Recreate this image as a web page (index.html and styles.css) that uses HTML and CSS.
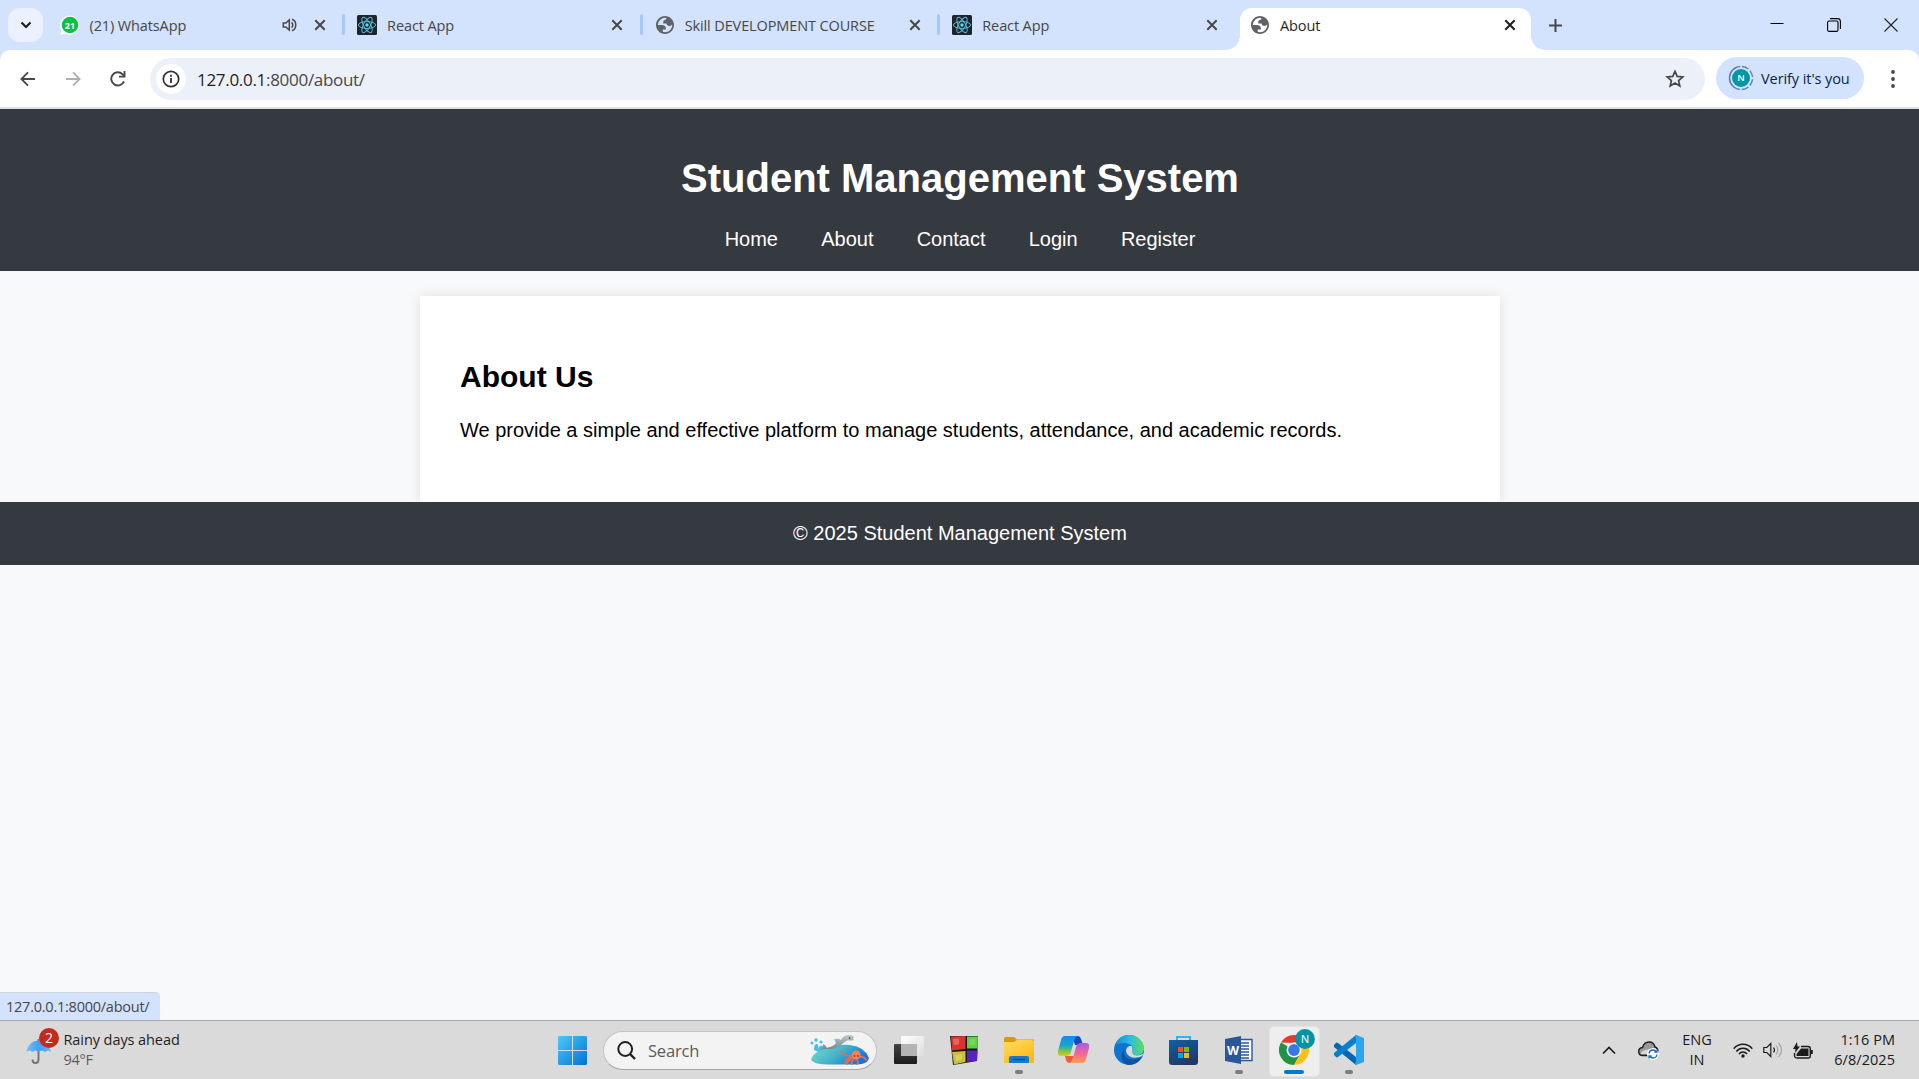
FILE: index.html
```html
<!DOCTYPE html>
<html lang="en">
<head>
<meta charset="utf-8">
<title>About</title>
<link rel="stylesheet" href="styles.css">
</head>
<body>
<svg class="defs" width="0" height="0" aria-hidden="true">
  <defs>
    <symbol id="close" viewBox="0 0 12 12"><path d="M1.300 1.300l9.400 9.400M10.700 1.300l-9.400 9.400" fill="none" stroke="currentColor" stroke-width="2"/></symbol>
    <symbol id="globe" viewBox="2 2 20 20"><path fill="currentColor" fill-rule="evenodd" d="M12 2C6.480 2 2 6.480 2 12s4.480 10 10 10 10-4.480 10-10S17.520 2 12 2zM4 12h4.400c3.407.022 4.922 1.730 4.543 5.127H9.488v2.470a8.004 8.004 0 0 0 10.498-8.083C19.327 12.504 18.332 13 17 13c-2.137 0-3.206-.916-3.206-2.750h-3.748c-.274-2.728.683-4.092 2.870-4.092 0-.975.327-1.597.811-1.970A8 8 0 0 0 4 12z"/></symbol>
    <symbol id="react" viewBox="0 0 20 20"><rect width="20" height="20" rx="1.500" fill="#20232a"/><g fill="none" stroke="#53bdd5" stroke-width="1"><ellipse cx="10" cy="10" rx="8.600" ry="3.400"/><ellipse cx="10" cy="10" rx="8.600" ry="3.400" transform="rotate(60 10 10)"/><ellipse cx="10" cy="10" rx="8.600" ry="3.400" transform="rotate(120 10 10)"/></g><circle cx="10" cy="10" r="1.700" fill="#61dafb"/></symbol>
  </defs>
</svg>

<div class="tabstrip">
  <div class="tab-search"><svg width="12" height="8" viewBox="0 0 12 8"><path d="M1.500 1.500L6 6l4.500-4.500" fill="none" stroke="#1f1f1f" stroke-width="2.200"/></svg></div>
  <div class="tab">
    <svg class="favicon" viewBox="0 0 20 20"><path d="M0 20l1.400-4.800a9.600 9.600 0 1 1 3.700 3.500z" fill="#fff"/><circle cx="10" cy="10" r="8.300" fill="#0bc143"/><text x="10" y="13.600" class="wa-count">21</text></svg>
    <span class="tab-title">(21) WhatsApp</span>
    <svg class="audio" width="16" height="14" viewBox="0 0 16 14"><path d="M1.300 5v4h2.500l3.500 3V2L3.800 5z" fill="none" stroke="#474747" stroke-width="1.500"/><path d="M9.500 4.300c1.700 1.400 1.700 4 0 5.400M10 1.300c5 1.700 5 9.700 0 11.400" fill="none" stroke="#474747" stroke-width="1.500"/></svg>
    <svg class="close"><use href="#close"/></svg>
  </div>
  <div class="tab">
    <svg class="favicon"><use href="#react"/></svg>
    <span class="tab-title">React App</span>
    <svg class="close"><use href="#close"/></svg>
  </div>
  <div class="tab">
    <svg class="favicon globe"><use href="#globe"/></svg>
    <span class="tab-title">Skill DEVELOPMENT COURSE</span>
    <svg class="close"><use href="#close"/></svg>
  </div>
  <div class="tab">
    <svg class="favicon"><use href="#react"/></svg>
    <span class="tab-title">React App</span>
    <svg class="close"><use href="#close"/></svg>
  </div>
  <div class="tab active">
    <svg class="favicon globe"><use href="#globe"/></svg>
    <span class="tab-title">About</span>
    <svg class="close"><use href="#close"/></svg>
  </div>
  <svg class="new-tab" width="13" height="13" viewBox="0 0 13 13"><path d="M6.500 0v13M0 6.500h13" stroke="#474747" stroke-width="2"/></svg>
  <div class="window-controls">
    <svg width="14" height="14" viewBox="0 0 14 14"><path d="M.5 5.500h13" stroke="#000" stroke-width="1"/></svg>
    <svg width="14" height="14" viewBox="0 0 14 14"><rect x=".6" y="3" width="10.400" height="10.400" rx="1.500" fill="none" stroke="#000" stroke-width="1.100"/><path d="M3 .6h7.500q2.900 0 2.900 2.900V11" fill="none" stroke="#000" stroke-width="1.100"/></svg>
    <svg width="14" height="14" viewBox="0 0 14 14"><path d="M.5.5l13 13M13.500.5l-13 13" stroke="#222" stroke-width="1.100"/></svg>
  </div>
</div>

<div class="toolbar">
  <div class="nav-buttons">
    <svg width="16" height="16" viewBox="0 0 16 16"><path d="M15 8H2M8 1.300L1.400 8 8 14.700" fill="none" stroke="#474747" stroke-width="1.800"/></svg>
    <svg width="16" height="16" viewBox="0 0 16 16"><path d="M1 8h13M8 1.300L14.600 8 8 14.700" fill="none" stroke="#b0b0b0" stroke-width="1.800"/></svg>
    <svg width="16" height="16" viewBox="0 0 16 16"><path d="M14 10.300A6.600 6.600 0 1 1 12.600 3.300L14.300 5" fill="none" stroke="#474747" stroke-width="1.900"/><path d="M14.500 0v5.600H9" fill="none" stroke="#474747" stroke-width="1.900"/></svg>
  </div>
  <div class="omnibox">
    <div class="site-info"><svg width="18" height="18" viewBox="0 0 18 18"><circle cx="9" cy="9" r="7.700" fill="none" stroke="#303134" stroke-width="1.700"/><path d="M9 8v5M9 4.700v2" stroke="#303134" stroke-width="1.800"/></svg></div>
    <span class="url"><b>127.0.0.1</b>:8000/about/</span>
    <svg class="star" width="20" height="19" viewBox="0 0 20 19"><path d="M10 2.300l2.200 5.100 5.600.500-4.200 3.700 1.200 5.400L10 14.100 5.200 17l1.200-5.400-4.200-3.700 5.600-.5z" fill="none" stroke="#474747" stroke-width="1.700"/></svg>
  </div>
  <div class="profile">
    <svg width="26" height="26" viewBox="0 0 26 26"><circle cx="13" cy="13" r="11.600" fill="none" stroke="#5d7fb8" stroke-width="1.400" stroke-dasharray="7 2.100" transform="rotate(-85 13 13)"/><path d="M9 2.100A11.600 11.600 0 0 0 6 22" fill="none" stroke="#5d7fb8" stroke-width="1.400"/><circle cx="13" cy="13" r="9" fill="#0097a7"/><text x="13" y="16.400" class="avatar-letter">N</text></svg>
    <span>Verify it's you</span>
  </div>
  <svg class="menu" width="4" height="18" viewBox="0 0 4 18"><g fill="#474747"><circle cx="2" cy="2" r="1.900"/><circle cx="2" cy="9" r="1.900"/><circle cx="2" cy="16" r="1.900"/></g></svg>
</div>

<div class="viewport">
  <header class="site-header">
    <h1>Student Management System</h1>
    <nav><a>Home</a><a>About</a><a>Contact</a><a>Login</a><a>Register</a></nav>
  </header>
  <main class="card">
    <h2>About Us</h2>
    <p>We provide a simple and effective platform to manage students, attendance, and academic records.</p>
  </main>
  <footer class="site-footer">© 2025 Student Management System</footer>
  <div class="status"><span>127.0.0.1:8000/about/</span></div>
</div>

<div class="taskbar">
  <div class="weather">
    <svg width="34" height="38" viewBox="0 0 34 38"><defs><linearGradient id="um" x2="1"><stop stop-color="#7ec0f5"/><stop offset=".5" stop-color="#3fa0f4"/><stop offset="1" stop-color="#67b5f5"/></linearGradient></defs><path d="M12.500 11v20.500q0 3.500-3 3.500t-3-3.500" fill="none" stroke="#777" stroke-width="2"/><path d="M0 24Q3 12.500 12.500 12.500T25 24q-3-2.500-6 0-3.500-3-6.500 0-3-3-6 0-3-2.500-6.500 0z" fill="url(#um)"/><circle cx="23" cy="10" r="10" fill="#c42b1c"/><text x="23" y="15" class="badge-count">2</text></svg>
    <div class="weather-text"><span class="headline">Rainy days ahead</span><span class="temp">94°F</span></div>
  </div>
  <div class="apps">
    <div class="app"><svg width="29" height="29" viewBox="0 0 29 29"><defs><linearGradient id="wn" x2="1" y2="1"><stop stop-color="#4cc9fb"/><stop offset="1" stop-color="#0173d2"/></linearGradient></defs><path d="M1 0h13v14H0V1zM15 0h13l1 1v13H15zM0 15h14v14H1l-1-1zM15 15h14v13l-1 1H15z" fill="url(#wn)"/></svg></div>
    <div class="search">
      <svg width="19" height="19" viewBox="0 0 19 19"><circle cx="8.200" cy="8" r="6.900" fill="none" stroke="#222" stroke-width="2"/><path d="M13 13l5 5" stroke="#222" stroke-width="2.400"/></svg>
      <span>Search</span>
      <svg class="dolphin" width="60" height="32" viewBox="0 0 60 32"><defs><linearGradient id="sea" x2="1" y2=".4"><stop stop-color="#7fdccc"/><stop offset=".55" stop-color="#43b5c8"/><stop offset="1" stop-color="#1674dc"/></linearGradient><linearGradient id="dl" y2="1" x2="0"><stop stop-color="#bdc9cc"/><stop offset="1" stop-color="#6d8790"/></linearGradient></defs><path d="M1 25Q6 15 20 13q8-3 20-2 15 2 19 13-1 6-12 6.500H17Q2 30 1 25z" fill="url(#sea)"/><g fill="#45bfe4"><path d="M4 16q0-7 3-6 2 1 1 5 2-5 5-3 1 4-4 6z"/><circle cx="2" cy="9" r="1.500"/><circle cx="6" cy="6" r="1.700"/><circle cx="11" cy="8" r="1.500"/></g><path d="M10 16q4-2 3-6 3 1 4 4 6-1 9-5l-2-4q5-1 7 1 2-5 8-5 4 0 5 2l-1 1.500 1 1.500q-4 1-6 0-4 2-8 6-6 4-13 3-3 0-7 1z" fill="url(#dl)"/><circle cx="39.500" cy="4" r=".8" fill="#333"/><g fill="none" stroke="#ec6a4b" stroke-width="1.800" stroke-linecap="round"><path d="M42 24q-6 0-7 5M41 22q-8 0-10-5M40 26q-3 1-3 4M47 26q2 3 0 4M49 23q6-1 7 3M43 26q-2 2-1 4"/></g><ellipse cx="46" cy="21" rx="4.500" ry="4.500" fill="#f58057"/><circle cx="44.500" cy="22" r=".8" fill="#502020"/><circle cx="48" cy="22" r=".8" fill="#502020"/></svg>
    </div>
    <div class="app"><svg width="30" height="29" viewBox="0 0 30 29"><defs><linearGradient id="bk" y2="1" x2="0"><stop stop-color="#424242"/><stop offset="1" stop-color="#1c1c1c"/></linearGradient><linearGradient id="wh" x2="1" y2="1"><stop stop-color="#fff"/><stop offset="1" stop-color="#ddd"/></linearGradient></defs><rect y="8" width="23" height="20" rx="1" fill="url(#bk)"/><rect x="7" width="23" height="20" rx="1" fill="url(#wh)"/><path d="M7 8h16v12H7z" fill="#b4b4b4"/></svg></div>
    <div class="app"><svg width="30" height="30" viewBox="0 0 30 30"><path d="M1 1l28 0-1 25L4 30z" fill="#171717"/><path d="M2 1.500L16.500 1v13L3 15.500z" fill="#d9342b"/><path d="M18 1.500H29l-.5 12H18z" fill="#5fd044"/><path d="M3 17l13.500-1v11L5 29.500z" fill="#c7c139"/><path d="M18 15.500h10.500L28 25.500l-10 2z" fill="#5822bd"/><path d="M4 4l6-.5v6L4.500 10z" fill="#e6655b"/><path d="M20.500 4h6l-.5 6h-5.500z" fill="#72d95a"/><path d="M6 20l7-1v5l-6 2z" fill="#d6d254"/></svg></div>
    <div class="app open"><svg width="30" height="28" viewBox="0 0 30 28"><defs><linearGradient id="fo" x2=".7" y2="1"><stop stop-color="#ffdb65"/><stop offset="1" stop-color="#fcb914"/></linearGradient></defs><path d="M0 3q0-2 2-2h8l3 2.500h17V9H0z" fill="#dd9a08"/><path d="M0 6h10l3-2h15q2 0 2 2v21H0z" fill="url(#fo)"/><path d="M5 27v-5q0-2 2-2h16q2 0 2 2v5z" fill="#157bd0"/><path d="M9 23.500h12" stroke="#08478a" stroke-width="1.300"/></svg></div>
    <div class="app"><svg width="31" height="28" viewBox="0 0 31 28"><defs><linearGradient id="c1" x2="0" y2="1"><stop stop-color="#1788ed"/><stop offset=".5" stop-color="#16a9c5"/><stop offset=".8" stop-color="#8bc83d"/><stop offset="1" stop-color="#f3c50d"/></linearGradient><linearGradient id="c2" x2="0" y2="1"><stop stop-color="#a45be8"/><stop offset=".5" stop-color="#f1649c"/><stop offset="1" stop-color="#ff9d4f"/></linearGradient></defs><path d="M14 0h6q2 0 3 3l2 6h-8z" fill="#1547c4"/><path d="M7 20h9l-3 7h-2q-2 0-3-3z" fill="#f05c35"/><path d="M7 0h13q-3 1-4 5l-3 11q-1 4-5 4H3q-4 0-3-5L3 4q1-4 4-4z" fill="url(#c1)"/><path d="M24 27H11q3-1 4-5l3-11q1-4 5-4h5q4 0 3 5l-3 11q-1 4-4 4z" fill="url(#c2)"/></svg></div>
    <div class="app"><svg width="30" height="30" viewBox="0 0 30 30"><defs><linearGradient id="e1" x2="1"><stop stop-color="#1687d9"/><stop offset=".5" stop-color="#28bde0"/><stop offset="1" stop-color="#62dc59"/></linearGradient></defs><circle cx="15" cy="15" r="15" fill="#0d75ce"/><path d="M1 10Q5 0 15 0c9 0 15 7 15 13 0 6-5 8-10 7-3-.5-2-2-1-4 1-6-5-8-9-8-4 0-7 1-9 2z" fill="url(#e1)"/><path d="M11 13c-4 9 4 15 17 9q-5 8-13 8C7 29 5 19 11 13z" fill="#1053a3"/><path d="M18 11.500c-4-2-7 3-5.500 6.500 2.500 5 9.500 6 15.500 3l2.500-3q-6 3.500-10.500 2c-3-1.500-.5-3-2-8.500z" fill="#dadada"/></svg></div>
    <div class="app"><svg width="29" height="29" viewBox="0 0 29 29"><defs><linearGradient id="st" x2=".5" y2="1"><stop stop-color="#0c61a9"/><stop offset="1" stop-color="#213960"/></linearGradient></defs><path d="M8 5V1h13v4" fill="none" stroke="#2cb6ef" stroke-width="2"/><path d="M0 4h29v22q0 3-3 3H3q-3 0-3-3z" fill="url(#st)"/><path d="M9 11h5v5H9z" fill="#f25022"/><path d="M15 11h5v5h-5z" fill="#7fba00"/><path d="M9 17h5v5H9z" fill="#00a4ef"/><path d="M15 17h5v5h-5z" fill="#ffb900"/></svg></div>
    <div class="app open"><svg width="28" height="28" viewBox="0 0 28 28"><path d="M14 3.500h13v21H14z" fill="#fff" stroke="#2b579a" stroke-width="1.400"/><path d="M16 7h8M16 10h8M16 13h8M16 16h8M16 19h8M16 22h8" stroke="#2b579a" stroke-width="1.300"/><path d="M0 3l16-3v28L0 25z" fill="#2b579a"/><text x="8" y="18.500" class="word-letter">W</text></svg></div>
    <div class="app open current"><svg width="36" height="36" viewBox="0 0 36 36"><path d="M2 13.500A15 15 0 0 1 28 13.500L15 14z" fill="#e33b2e"/><path d="M2 13.500A15 15 0 0 0 15 36l6.500-11.250L15 21z" fill="#229342"/><path d="M28 13.500H15v7.500l6.500 3.700L15 36A15 15 0 0 0 28 13.500z" fill="#fbc116"/><circle cx="15" cy="21" r="7.500" fill="#fff"/><circle cx="15" cy="21" r="5.900" fill="#3b78e7"/><circle cx="26" cy="10" r="9.900" fill="#0594a5"/><text x="26" y="14" class="chrome-letter">N</text></svg></div>
    <div class="app open"><svg width="30" height="30" viewBox="0 0 30 30"><path d="M0 10l2-2q1-.8 2 0l18 14v8L0 12z" fill="#0067b0"/><path d="M0 20l2 2q1 .8 2 0L22 8V0L0 18z" fill="#087fcb"/><path d="M21 0l1-.1L30 3v24l-8 3-1-1 1-3V4z" fill="#2ba5ee"/></svg></div>
  </div>
  <div class="tray">
    <svg class="chevron" width="14" height="9" viewBox="0 0 14 9"><path d="M1 7.500l6-6 6 6" fill="none" stroke="#1b1b1b" stroke-width="1.700"/></svg>
    <svg class="cloud" width="21" height="19" viewBox="0 0 21 19"><path d="M4 14.500Q.7 14 .7 10.500T4.500 6.500Q6 1 11 1t6 5q3 1 3 5 0 3.500-4 3.500z" fill="#999" stroke="#1b1b1b" stroke-width="1.400"/><path d="M3 13q0-3 4-4l10-2 2 6z" fill="#d6d6d6"/><circle cx="15" cy="13" r="6" fill="#fff"/><path d="M11 12.500q.5-3.500 4-3.500 2 0 3.500 2M19 13.500q-.5 3.500-4 3.500-2 0-3.500-2M19 8.500V11h-2.500M11 17.500V15h2.500" fill="none" stroke="#1269b8" stroke-width="1.300"/></svg>
    <div class="lang"><span>ENG</span><span>IN</span></div>
    <svg class="wifi" width="20" height="15" viewBox="0 0 20 15"><path d="M.7 5.700Q4.500 1.300 10 1.300t9.300 4.400M3.300 8.400Q6 5.200 10 5.200t6.700 3.200M6 11Q7.500 9 10 9t4 2" fill="none" stroke="#1b1b1b" stroke-width="1.500"/><circle cx="10" cy="13" r="1.700" fill="#1b1b1b"/></svg>
    <svg class="sound" width="20" height="16" viewBox="0 0 20 16"><path d="M.8 5.500v5h3l4 4V1.500l-4 4z" fill="none" stroke="#1b1b1b" stroke-width="1.200"/><path d="M10.500 5.500q2 2.500 0 5" fill="none" stroke="#1b1b1b" stroke-width="1.200"/><path d="M13 3.500q3.500 4.500 0 9M15.500 1q6 7 0 14" fill="none" stroke="#a5a5a5" stroke-width="1.200"/></svg>
    <svg class="battery" width="20" height="17" viewBox="0 0 20 17"><path d="M8 4.500h7q2.300 0 2.300 2.200v7q0 2.300-2.300 2.300H4q-2.500 0-2.500-2.500V11" fill="none" stroke="#1b1b1b" stroke-width="1.400"/><path d="M8 6.500h7.500V14H3.500v-2z" fill="#1b1b1b"/><path d="M18 8h1.800v4H18z" fill="#1b1b1b"/><path d="M4 0L0 7h2.500L2 11l5-6.500H4.500z" fill="#1b1b1b"/></svg>
    <div class="clock"><span>1:16 PM</span><span>6/8/2025</span></div>
  </div>
</div>
</body>
</html>
```
FILE: styles.css
```css
* { box-sizing: border-box; }

body {
  margin: 0;
  width: 1919px;
  height: 1079px;
  overflow: hidden;
  display: flex;
  flex-direction: column;
  font-family: "Open Sans", "Noto Sans", sans-serif;
  font-size: 14.500px;
  letter-spacing: -0.08px;
  color: #1f1f1f;
  background: #d3e2fd;
}

svg { display: block; flex: none; }
.defs { position: absolute; }
span { white-space: nowrap; }

/* Tab strip */
.tabstrip {
  height: 50px;
  flex: none;
  display: flex;
  align-items: center;
  padding-left: 8px;
}

.tab-search {
  width: 35px;
  height: 34px;
  margin-right: 3.500px;
  border-radius: 12px;
  background: #ebf1fe;
  display: grid;
  place-items: center;
}

.tab {
  position: relative;
  width: 297.600px;
  height: 50px;
  padding: 0 18.500px 0 13px;
  display: flex;
  align-items: center;
  color: #474747;
}

.tab:not(.active)::after {
  content: "";
  position: absolute;
  right: -1px;
  top: 14px;
  width: 3px;
  height: 21px;
  border-radius: 2px;
  background: #a8c7fa;
}
.tab:has(+ .active)::after { display: none; }

.favicon { width: 20px; height: 20px; }
.globe { width: 18px; height: 18px; margin: 0 1px; color: #5f6368; }
.tab-title { flex: 1; margin-left: 10px; letter-spacing: -0.12px; }
.close { width: 12px; height: 12px; }
.audio { margin-right: 16px; }

.wa-count {
  font-size: 9px;
  font-weight: 700;
  letter-spacing: 0;
  fill: #fff;
  text-anchor: middle;
}

.active {
  color: #1f1f1f;
  width: 291px;
  height: 42px;
  margin: 8px 3.200px 0;
  padding: 0 15px 8px 10px;
  border-radius: 12px 12px 0 0;
  background: #fff;
}
.active::before,
.active::after {
  content: "";
  position: absolute;
  bottom: 0;
  width: 14px;
  height: 14px;
}
.active::before { left: -14px; background: radial-gradient(circle at 0 0, transparent 13.500px, #fff 14px); }
.active::after { right: -14px; background: radial-gradient(circle at 100% 0, transparent 13.500px, #fff 14px); }

.new-tab { margin-left: 15px; }
.window-controls {
  flex: 1;
  display: flex;
  justify-content: flex-end;
  gap: 43px;
  padding-right: 21px;
}

/* Toolbar */
.toolbar {
  height: 59px;
  flex: none;
  display: flex;
  align-items: center;
  background: #fff;
  border-bottom: 2px solid #dfe3df;
  border-radius: 10px 10px 0 0;
}
.nav-buttons { width: 150px; padding-left: 20px; display: flex; gap: 29px; }

.omnibox {
  width: 1555px;
  height: 42px;
  padding: 0 20px 0 6px;
  border-radius: 21px;
  background: #ecf0f9;
  display: flex;
  align-items: center;
}
.site-info {
  width: 30px;
  height: 30px;
  border-radius: 50%;
  background: #fff;
  display: grid;
  place-items: center;
}
.url { flex: 1; margin-left: 11px; padding-top: 1px; font-size: 17px; letter-spacing: -0.3px; color: #474747; }
.url b { font-weight: 400; color: #1f1f1f; }

.profile {
  width: 148px;
  height: 42px;
  margin: 0 0 1px 11px;
  padding-left: 12px;
  border-radius: 21px;
  background: #d3e2fd;
  color: #0a2450;
  display: flex;
  align-items: center;
  gap: 7px;
}
.avatar-letter { font-size: 9.500px; font-weight: 600; letter-spacing: 0; fill: #fff; text-anchor: middle; }
.menu { margin-left: 27px; }

/* Page */
.viewport {
  position: relative;
  flex: 1;
  background: #f8f9fb;
  font-family: "Liberation Sans", Arial, sans-serif;
  font-size: 20px;
  letter-spacing: 0;
  color: #000;
}
.site-header {
  height: 162px;
  padding: 46px 0 0 1px;
  background: #353940;
  color: #fff;
  text-align: center;
}
h1 { margin: 0; font-size: 40px; line-height: 46px; }
nav { display: flex; justify-content: center; gap: 43.200px; margin-top: 26px; line-height: 24px; }

.card {
  width: 1080px;
  height: 206px;
  margin: 25px auto 0;
  padding: 64px 40px 0 40.500px;
  background: #fff;
  box-shadow: 0 0 12.500px rgba(0, 0, 0, 0.1);
}
h2 { margin: 0; font-size: 30px; line-height: 34px; }
p { margin: 25px 0 0; line-height: 23px; }

.site-footer {
  position: relative;
  height: 63px;
  padding-left: 1px;
  background: #353940;
  color: #fff;
  text-align: center;
  line-height: 62px;
}

.status {
  position: absolute;
  left: 0;
  bottom: 0;
  width: 160px;
  height: 28px;
  padding-left: 6px;
  border-top: 1px solid #cdd3df;
  border-radius: 0 5px 0 0;
  background: #d3e2fd;
  color: #474747;
  font: 14.500px/28px "Open Sans", sans-serif;
  letter-spacing: -0.24px;
}

/* Taskbar */
.taskbar {
  height: 59px;
  flex: none;
  display: flex;
  border-top: 1px solid #a8a8a8;
  background: #dadada;
}
.weather { width: 545px; padding: 7px 0 0 26px; display: flex; gap: 3.500px; }
.weather-text, .lang, .clock { display: flex; flex-direction: column; line-height: 20px; }
.weather-text { padding-top: 2px; }
.temp { color: #5c5c5c; letter-spacing: -0.3px; }
.badge-count { font-size: 14px; letter-spacing: 0; fill: #fff; text-anchor: middle; }

.apps { display: flex; align-items: center; }
.app {
  position: relative;
  width: 55px;
  height: 58px;
  display: grid;
  place-items: center;
}
.app > svg { position: relative; }
.open::after {
  content: "";
  position: absolute;
  bottom: 5px;
  width: 8px;
  height: 4px;
  border-radius: 2px;
  background: #7d7d7d;
}
.current::before {
  content: "";
  position: absolute;
  left: 3px;
  top: 5px;
  width: 49px;
  height: 49px;
  border-radius: 5px;
  background: #eee;
  border: 1px solid #e3e3e3;
}
.current > svg { left: 3px; top: -3px; }
.current::after { width: 20px; background: #0078d4; }
.word-letter { font-size: 12.500px; font-weight: 700; letter-spacing: 0; fill: #fff; text-anchor: middle; }
.chrome-letter { font-size: 11px; font-weight: 600; letter-spacing: 0; fill: #c8f2f4; text-anchor: middle; }

.search {
  width: 274px;
  height: 39px;
  margin: 0 4px 0 3px;
  padding: 0 6px 0 13px;
  border: 1px solid #c3c3c3;
  border-bottom-color: #a6a6a6;
  border-radius: 20px;
  background: #f3f3f3;
  display: flex;
  align-items: center;
  font-size: 16.500px;
  color: #5b5b5b;
}
.search span { flex: 1; margin-left: 12px; letter-spacing: -0.2px; }

.tray { flex: 1; display: flex; align-items: center; padding-left: 226px; color: #1b1b1b; }
.cloud { margin-left: 22px; }
.lang { width: 36px; margin-left: 20px; align-items: center; }
.wifi { margin-left: 18px; }
.sound { margin-left: 10px; }
.battery { margin-left: 10px; }
.clock { flex: 1; padding-right: 24px; align-items: flex-end; letter-spacing: 0.05px; }
```
